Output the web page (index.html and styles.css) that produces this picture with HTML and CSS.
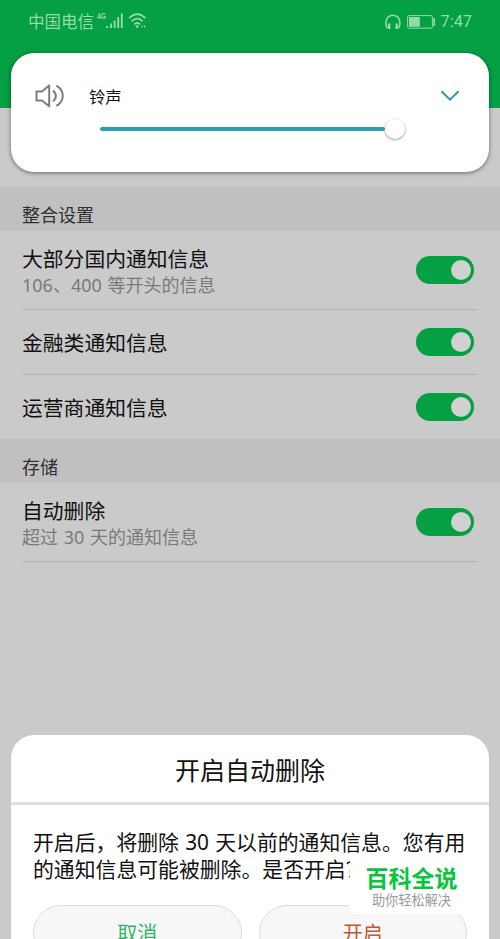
FILE: index.html
```html
<!DOCTYPE html>
<html lang="zh-CN">
<head>
    <meta charset="UTF-8">
    <meta name="viewport" content="width=device-width, initial-scale=1.0">
    <title>通知信息设置</title>
    <link rel="stylesheet" href="styles.css">
</head>
<body>
    <div class="screen">
        <header class="topbar">
            <div class="status">
                <span class="carrier">中国电信</span>
                <span class="network">4G</span>
                <svg class="signal" width="17" height="16" viewBox="0 0 17 16">
                    <path d="M1.2 13v2M5 10.5V15M8.6 7.5V15M12.2 4V15M15.8 .5V15" stroke="currentColor" stroke-width="1.9"/>
                </svg>
                <svg class="wifi" width="19" height="16" viewBox="0 0 19 16" fill="none" stroke="currentColor" stroke-width="1.7">
                    <path d="M1 5.2Q9.2-2.8 17.4 5.2M3.7 8.4Q9.2 3 14.7 8.4M6.3 11.4Q9.2 8.6 12.1 11.4"/>
                    <circle cx="9.2" cy="13.6" r="1.4" fill="currentColor" stroke="none"/>
                    <path d="M14.2 12.5v2M16.6 12.5v2" stroke-width="1.2"/>
                </svg>
                <span class="spacer"></span>
                <svg class="headset" width="16" height="16" viewBox="0 0 16 16" fill="none" stroke="currentColor">
                    <path d="M2.7 14.1Q1 12.8 1 8.2A6.8 6.8 0 0 1 14.9 8.2Q14.9 12.8 13.2 14.1" stroke-width="1.6"/>
                    <path d="M4.2 9.5V15M11.7 9.5V15" stroke-width="2.4"/>
                </svg>
                <svg class="battery" width="29" height="14" viewBox="0 0 29 14">
                    <rect x=".6" y=".6" width="24.8" height="12.6" rx="1.5" fill="none" stroke="currentColor"/>
                    <rect x="2" y="2" width="10.8" height="9.8" fill="currentColor"/>
                    <path d="M27.2 3v8" stroke="currentColor" stroke-width="1.7"/>
                </svg>
                <span class="time">7:47</span>
            </div>
        </header>

        <main class="settings">
            <h2 class="section-title">整合设置</h2>
            <div class="row tall">
                <div class="label">
                    <p class="name">大部分国内通知信息</p>
                    <p class="desc">106、400 等开头的信息</p>
                </div>
                <span class="switch"></span>
            </div>
            <div class="row">
                <p class="name">金融类通知信息</p>
                <span class="switch"></span>
            </div>
            <div class="row last">
                <p class="name">运营商通知信息</p>
                <span class="switch"></span>
            </div>
            <h2 class="section-title">存储</h2>
            <div class="row tall">
                <div class="label">
                    <p class="name">自动删除</p>
                    <p class="desc">超过 30 天的通知信息</p>
                </div>
                <span class="switch"></span>
            </div>
        </main>

        <!-- volume panel -->
        <div class="volume">
            <div class="volume-head">
                <svg width="30" height="24" viewBox="0 0 30 24" fill="none" stroke="#7d7d7d" stroke-width="2" stroke-linejoin="round">
                    <path d="M1.5 7.5H7L14.2 1.4V22.2L7 16.5H1.5Z"/>
                    <path d="M18 6.6Q20.8 8.6 20.8 11.9T18 17.2M21.3 1.7Q27.8 5.2 27.8 11.8T21.3 21.9"/>
                </svg>
                <span class="volume-name">铃声</span>
                <svg width="20" height="12" viewBox="0 0 20 12" fill="none" stroke="#2b98a8" stroke-width="2">
                    <path d="M1.5 1.3L10 9.6L18.5 1.3"/>
                </svg>
            </div>
            <div class="slider">
                <span class="track"></span>
                <span class="thumb"></span>
            </div>
        </div>

        <!-- confirm dialog -->
        <div class="dialog">
            <h1 class="dialog-title">开启自动删除</h1>
            <p class="dialog-text">开启后，将删除 30 天以前的通知信息。您有用<br>的通知信息可能被删除。是否开启？</p>
            <div class="actions">
                <button class="cancel">取消</button>
                <button class="confirm">开启</button>
            </div>
        </div>

        <div class="watermark">
            <strong>百科全说</strong>
            <span>助你轻松解决</span>
        </div>
    </div>
</body>
</html>
```
FILE: styles.css
```css
* { box-sizing: border-box; }
body { margin: 0; font-family: "Noto Sans", "Noto Sans CJK SC", sans-serif; }
h1, h2, p { margin: 0; font-weight: normal; }
.screen { position: relative; width: 500px; height: 939px; overflow: hidden; background: #cacaca; }

.topbar { height: 108px; background: #04a043; }
.status { display: flex; align-items: center; height: 43px; padding: 0 28px; color: #93dba9; }
.carrier { font-size: 16.5px; line-height: 24px; }
.network { width: 9px; margin: -11px 0 0 3px; font: bold 9px/10px "Liberation Sans", sans-serif; transform: scaleX(.75); transform-origin: left; }
.signal { margin-top: -2px; }
.wifi { margin: -2px 0 0 5px; }
.spacer { flex: 1; }
.headset { margin-right: 6px; }
.battery { margin-right: 5px; }
.time { margin-top: 1px; font-size: 16.3px; line-height: 24px; font-family: Roboto, sans-serif; }

.settings { padding-top: 79px; }
.section-title { height: 44px; padding: 6px 22px 0; background: #c0c0c0; color: #303030; font-size: 18px; line-height: 44px; }
.row { display: flex; align-items: center; justify-content: space-between; height: 65px; margin: 0 22px; padding-right: 4px; border-bottom: 1px solid #b2b2b2; }
.row.tall { height: 79px; }
.row.last { height: 64px; border-bottom: 0; }
.name { padding-top: 2px; font-size: 20.8px; line-height: 28px; color: #111; }
.desc { font-size: 18px; line-height: 25px; word-spacing: 1px; color: #7a7a7a; }
.switch { display: flex; justify-content: flex-end; width: 58px; height: 28px; padding: 4px 3px; border-radius: 14px; background: #04a043; }
.switch::after { content: ""; width: 20px; height: 20px; border-radius: 50%; background: #d1d1d1; }

.volume { position: absolute; left: 11px; top: 53px; width: 478px; height: 119px; border-radius: 23px; background: #fff; box-shadow: 0 1px 4px rgba(0, 0, 0, .5); }
.volume-head { display: flex; align-items: center; height: 86px; padding: 0 29px 0 24px; }
.volume-name { flex: 1; margin-left: 24px; font-size: 16.3px; color: #111; }
.slider { display: flex; align-items: center; height: 20px; margin: -20px 0 0 89px; }
.track { width: 285px; height: 4px; border-radius: 2px; background: #2b9fad; }
.thumb { width: 20px; height: 20px; border-radius: 50%; background: #fff; box-shadow: 0 1px 3px rgba(0, 0, 0, .4); }

.dialog { position: absolute; left: 11px; top: 735px; width: 478px; height: 240px; border-radius: 23px; background: #fff; }
.dialog-title { height: 70px; border-bottom: 3px solid #e0e0e0; font-size: 25px; line-height: 70px; text-align: center; color: #111; }
.dialog-text { padding: 24px 0 0 22px; font-size: 20.85px; line-height: 27px; word-spacing: .8px; white-space: nowrap; color: #111; }
.actions { display: flex; gap: 17px; padding: 22px 22px 0; }
.actions button { flex: 1; height: 56px; padding: 0; border: 1px solid #dcdcdc; border-radius: 28px; background: #f7f7f7; font: 20px/56px "Noto Sans", "Noto Sans CJK SC", sans-serif; }
.actions .cancel { color: #36b26b; }
.actions .confirm { color: #c05a31; }

.watermark { position: absolute; left: 350px; top: 861px; width: 123px; height: 53px; padding-top: 4px; background: #fff; text-align: center; }
.watermark strong { display: block; font-size: 23px; line-height: 27px; font-weight: 600; color: #06c63b; }
.watermark span { display: block; font-size: 13.2px; line-height: 16px; color: #999; }
```
